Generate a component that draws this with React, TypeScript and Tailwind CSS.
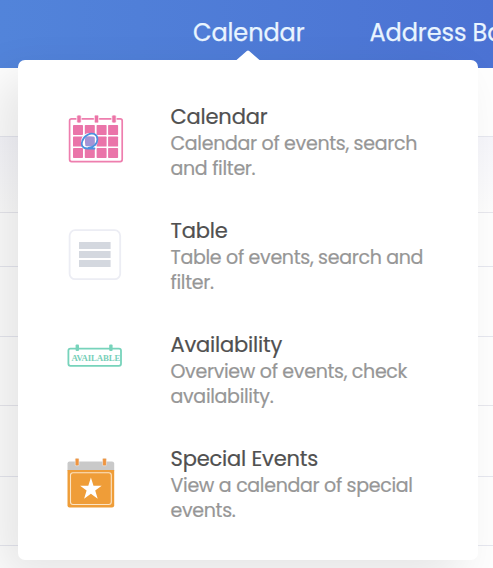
import type { ReactNode } from 'react'

function CalendarIcon() {
  const columns = [73, 84.8, 96.6, 108.1]
  const rows = [125, 136.6, 148]
  return (
    <svg width="56" height="50" viewBox="68 114 56 50" fill="none">
      <rect x="69.6" y="118.8" width="52.6" height="42.8" rx="2" stroke="#ee7eae" strokeWidth="1.7" />
      {[79, 96.5, 114].map((x) => (
        <rect key={x} x={x - 2.2} y="115" width="4.4" height="8" rx="1.2" fill="#ec74a7" stroke="#fff" strokeWidth=".8" />
      ))}
      {rows.map((y) =>
        columns.map((x) => (
          <rect key={`${x}-${y}`} x={x} y={y} width="10" height="10" rx=".7" fill="#ea74a9" />
        ))
      )}
      <ellipse cx="89.5" cy="141" rx="6.6" ry="6.4" stroke="#fff" strokeWidth="3.4" />
      <rect x="85.2" y="136.6" width="9.6" height="9.6" rx="1.5" fill="#a294d6" />
      <path
        d="M94.5 148.5H87C82.5 148.3 80.8 145 82.2 141.2C84 135.5 90 132.6 94.3 134C98.7 136 98 142 95 145C93.5 146.7 91 147.5 88.5 148"
        stroke="#4b91df"
        strokeWidth="1.8"
        strokeLinecap="round"
      />
    </svg>
  )
}

function TableIcon() {
  return (
    <svg width="54" height="52" viewBox="68 229 54 52" fill="none">
      <rect x="69.6" y="230.2" width="50.6" height="49" rx="5.5" stroke="#ecedf4" strokeWidth="1.8" />
      {[242, 251, 260].map((y) => (
        <rect key={y} x="79" y={y} width="31.6" height="7" fill="#d4d8df" />
      ))}
    </svg>
  )
}

function AvailabilityIcon() {
  return (
    <svg width="56" height="24" viewBox="67.4 344 56 24" fill="none">
      <rect x="68.8" y="348.6" width="52.6" height="17.2" rx="2" stroke="#77d3bb" strokeWidth="1.8" />
      {[77.7, 111.3].map((x) => (
        <rect key={x} x={x - 1.7} y="344.5" width="3.4" height="6.5" rx="1" fill="#77d3bb" />
      ))}
      <text
        x="71.8"
        y="360.8"
        textLength="49"
        lengthAdjust="spacing"
        className="font-['Liberation_Serif',serif] text-[8.8px] font-bold"
        fill="#77cfb9"
      >
        AVAILABLE
      </text>
    </svg>
  )
}

function SpecialIcon() {
  return (
    <svg width="48" height="50" viewBox="67.5 458 48 50" fill="none">
      <path d="M68 463.5Q68 461.5 70 461.5H112.5Q114.7 461.5 114.7 463.5V471H68Z" fill="#c9c9c9" />
      <path d="M68 470H114.7V505.5Q114.7 507.5 112.5 507.5H70Q68 507.5 68 505.5Z" fill="#ef9d38" />
      <rect x="71" y="472.7" width="40.8" height="31.8" rx="2.5" stroke="#fbe4c5" strokeWidth="1.1" />
      {[77.6, 105].map((x) => (
        <rect key={x} x={x - 1.9} y="458.3" width="3.8" height="7.5" rx="1" fill="#ef9540" stroke="#eee" strokeWidth=".6" />
      ))}
      <path
        d="M91.4 477.5L94 485.7H102.2L95.7 490.6L98.2 498.7L91.4 493.8L84.6 498.7L87.1 490.6L80.6 485.7H88.8Z"
        fill="#fff"
      />
    </svg>
  )
}

type MenuItemProps = {
  title: string
  lines: [string, string]
  icon: ReactNode
  iconClass: string
}

function MenuItem({ title, lines, icon, iconClass }: MenuItemProps) {
  return (
    <a className="flex h-[114px] items-start">
      <div className={`w-[103.5px] shrink-0 ${iconClass}`}>{icon}</div>
      <div className="whitespace-nowrap [-webkit-text-stroke:0.2px_currentColor]">
        <h3 className="text-[21px] leading-[26px] tracking-[-0.18px] text-[#505050]">{title}</h3>
        <p className="pt-[0.5px] text-[19px] leading-[25.5px] tracking-[-0.32px] text-[#969696]">
          {lines[0]}
          <br />
          {lines[1]}
        </p>
      </div>
    </a>
  )
}

const items: MenuItemProps[] = [
  {
    title: 'Calendar',
    lines: ['Calendar of events, search', 'and filter.'],
    icon: <CalendarIcon />,
    iconClass: 'pt-[10px] pl-[1px]',
  },
  {
    title: 'Table',
    lines: ['Table of events, search and', 'filter.'],
    icon: <TableIcon />,
    iconClass: 'pt-[11px] pl-[1px]',
  },
  {
    title: 'Availability',
    lines: ['Overview of events, check', 'availability.'],
    icon: <AvailabilityIcon />,
    iconClass: 'pt-[12px]',
  },
  {
    title: 'Special Events',
    lines: ['View a calendar of special', 'events.'],
    icon: <SpecialIcon />,
    iconClass: 'pt-[12px]',
  },
]

export default function App() {
  return (
    <div className="relative h-[568px] w-[493px] overflow-hidden bg-[#fefefe] font-['Poppins','Inter',sans-serif]">
      <header className="flex h-[68px] items-start gap-[65px] bg-linear-to-r from-[#5284da] to-[#4b72d3] pt-[17px] pl-[193px] text-[24px] leading-[32px] tracking-[-0.1px] whitespace-nowrap text-[#e9f5ff] [-webkit-text-stroke:0.25px_currentColor]">
        <span className="w-[111.5px] shrink-0">Calendar</span>
        <span>Address Book</span>
      </header>
      <div className="h-[69px] border-b border-[#e6e7ef]" />
      <div className="h-[76px] border-b border-[#e7e7ed] bg-linear-to-b from-[#f6f6fb] to-[#fdfdfd]" />
      <div className="h-[54px] border-b border-[#e6e7ef]" />
      <div className="h-[70px] border-b border-[#e6e7ef]" />
      <div className="h-[69px] border-b border-[#e7e7ed]" />
      <div className="h-[71px] border-b border-[#e6e7ef]" />
      <div className="h-[69px] border-b border-[#e6e7ef]" />

      <div className="absolute top-[60px] left-[18px] h-[500px] w-[460px] rounded-[7px] bg-white pt-[44px] pl-[49px] shadow-[-18px_18px_48px_rgba(0,0,0,0.1)]">
        <svg className="absolute -top-[10px] left-[217px]" width="26" height="11" viewBox="0 0 26 11">
          <path d="M0 11L1.5 10L11.8 1Q13 0 14.2 1L24.5 10L26 11Z" fill="#fff" />
        </svg>
        {items.map((item) => (
          <MenuItem key={item.title} {...item} />
        ))}
      </div>
    </div>
  )
}
